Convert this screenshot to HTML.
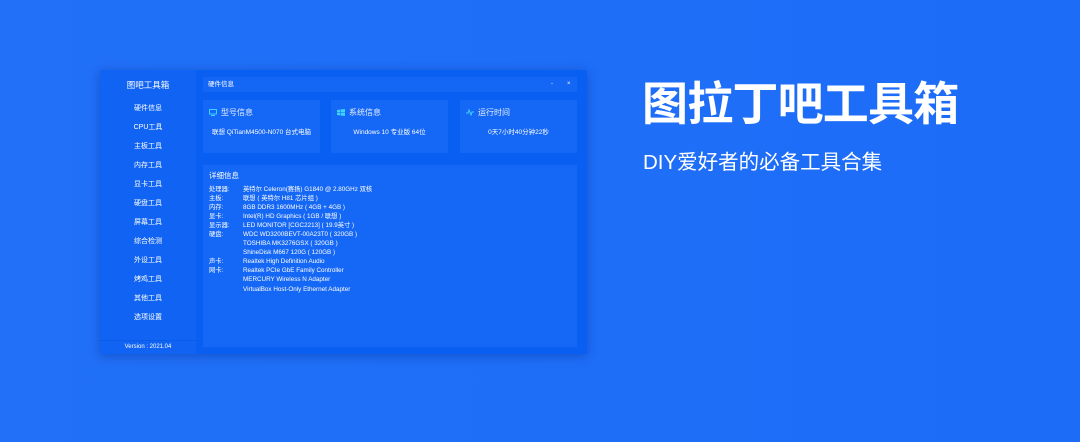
<!DOCTYPE html>
<html><head><meta charset="utf-8"><style>
*{margin:0;padding:0;box-sizing:border-box}
body{width:1080px;height:442px;overflow:hidden;background:linear-gradient(90deg,#2170f7,#1e6ef8 60%,#1d6cf7);font-family:"Liberation Sans","Noto Sans CJK SC",sans-serif;color:#fff;position:relative}
.win{position:absolute;left:100px;top:70px;width:487px;height:284px;background:#0a5ff3;box-shadow:0 2px 10px rgba(0,30,120,.35)}
.side{position:absolute;left:0;top:0;width:96px;height:284px;background:#1164f3}
.side .t{position:absolute;top:9px;width:96px;text-align:center;font-size:8.5px}
.side .it{position:absolute;width:96px;text-align:center;font-size:7px}
.side .ver{position:absolute;top:270px;height:14px;width:96px;border-top:1px solid #0a5be8;text-align:center;font-size:6px;line-height:13px}
.bar{position:absolute;left:103px;top:7px;width:374px;height:15px;background:#1466f5;font-size:6.5px;line-height:15px;padding-left:5px}
.bar span{position:absolute;font-size:6px}
.card{position:absolute;top:30px;width:117px;height:53px;background:#1567f6;font-size:7px}
.card .h{position:absolute;left:18px;top:7px;font-size:8px;color:#e8f0ff}
.card .ic{position:absolute;left:6px;top:9px;width:8px;height:7px}
.card .v{position:absolute;top:26px;width:100%;text-align:center;font-size:6.5px}
.det{position:absolute;left:103px;top:95px;width:374px;height:182px;background:#1567f6;font-size:6.3px;line-height:9.05px}
.det .h{position:absolute;left:6px;top:6px;font-size:7.5px}
.det .l{position:absolute;left:6px;top:20px}
.det .r{position:absolute;left:40px;top:20px}
.big{position:absolute;left:642px;top:74px;font-size:46px;font-weight:bold;letter-spacing:-0.8px;line-height:60px}
.sub{position:absolute;left:643px;top:150px;font-size:20.5px;line-height:26px}
</style></head><body>
<div class="win">
 <div class="side">
  <div class="t">图吧工具箱</div>
  <div class="it" style="top:33px">硬件信息</div>
  <div class="it" style="top:52px">CPU工具</div>
  <div class="it" style="top:71px">主板工具</div>
  <div class="it" style="top:90px">内存工具</div>
  <div class="it" style="top:109px">显卡工具</div>
  <div class="it" style="top:128px">硬盘工具</div>
  <div class="it" style="top:147px">屏幕工具</div>
  <div class="it" style="top:166px">综合检测</div>
  <div class="it" style="top:185px">外设工具</div>
  <div class="it" style="top:204px">烤鸡工具</div>
  <div class="it" style="top:223px">其他工具</div>
  <div class="it" style="top:242px">选项设置</div>
  <div class="ver">Version : 2021.04</div>
 </div>
 <div class="bar">硬件信息<span style="left:348px">-</span><span style="left:364px">×</span></div>
 <div class="card" style="left:103px"><svg class="ic" viewBox="0 0 8 7"><rect x="0.5" y="0.5" width="7" height="4.5" fill="none" stroke="#3fd0ff"/><rect x="2" y="6" width="4" height="1" fill="#3fd0ff"/></svg><div class="h">型号信息</div><div class="v">联想 QiTianM4500-N070 台式电脑</div></div>
 <div class="card" style="left:231px"><svg class="ic" viewBox="0 0 8 7"><path d="M0 1L3.5 .5V3.3H0ZM4 .4L8 0V3.3H4ZM0 3.7H3.5V6.5L0 6ZM4 3.7H8V7L4 6.6Z" fill="#3fd0ff"/></svg><div class="h">系统信息</div><div class="v">Windows 10 专业版 64位</div></div>
 <div class="card" style="left:360px"><svg class="ic" viewBox="0 0 8 7"><path d="M0 4H2L3 1L5 6L6 3H8" fill="none" stroke="#3fd0ff"/></svg><div class="h">运行时间</div><div class="v">0天7小时40分钟22秒</div></div>
 <div class="det"><div class="h">详细信息</div>
  <div class="l">处理器:<br>主板:<br>内存:<br>显卡:<br>显示器:<br>硬盘:<br><br><br>声卡:<br>网卡:</div>
  <div class="r">英特尔 Celeron(赛扬) G1840 @ 2.80GHz 双核<br>联想 ( 英特尔 H81 芯片组 )<br>8GB DDR3 1600MHz ( 4GB + 4GB )<br>Intel(R) HD Graphics ( 1GB / 联想 )<br>LED MONITOR [CGC2213] ( 19.9英寸 )<br>WDC WD3200BEVT-00A23T0 ( 320GB )<br>TOSHIBA MK3276GSX ( 320GB )<br>ShineDisk M667 120G ( 120GB )<br>Realtek High Definition Audio<br>Realtek PCIe GbE Family Controller<br>MERCURY Wireless N Adapter<br>VirtualBox Host-Only Ethernet Adapter</div>
 </div>
</div>
<div class="big">图拉丁吧工具箱</div>
<div class="sub">DIY爱好者的必备工具合集</div>
</body></html>
